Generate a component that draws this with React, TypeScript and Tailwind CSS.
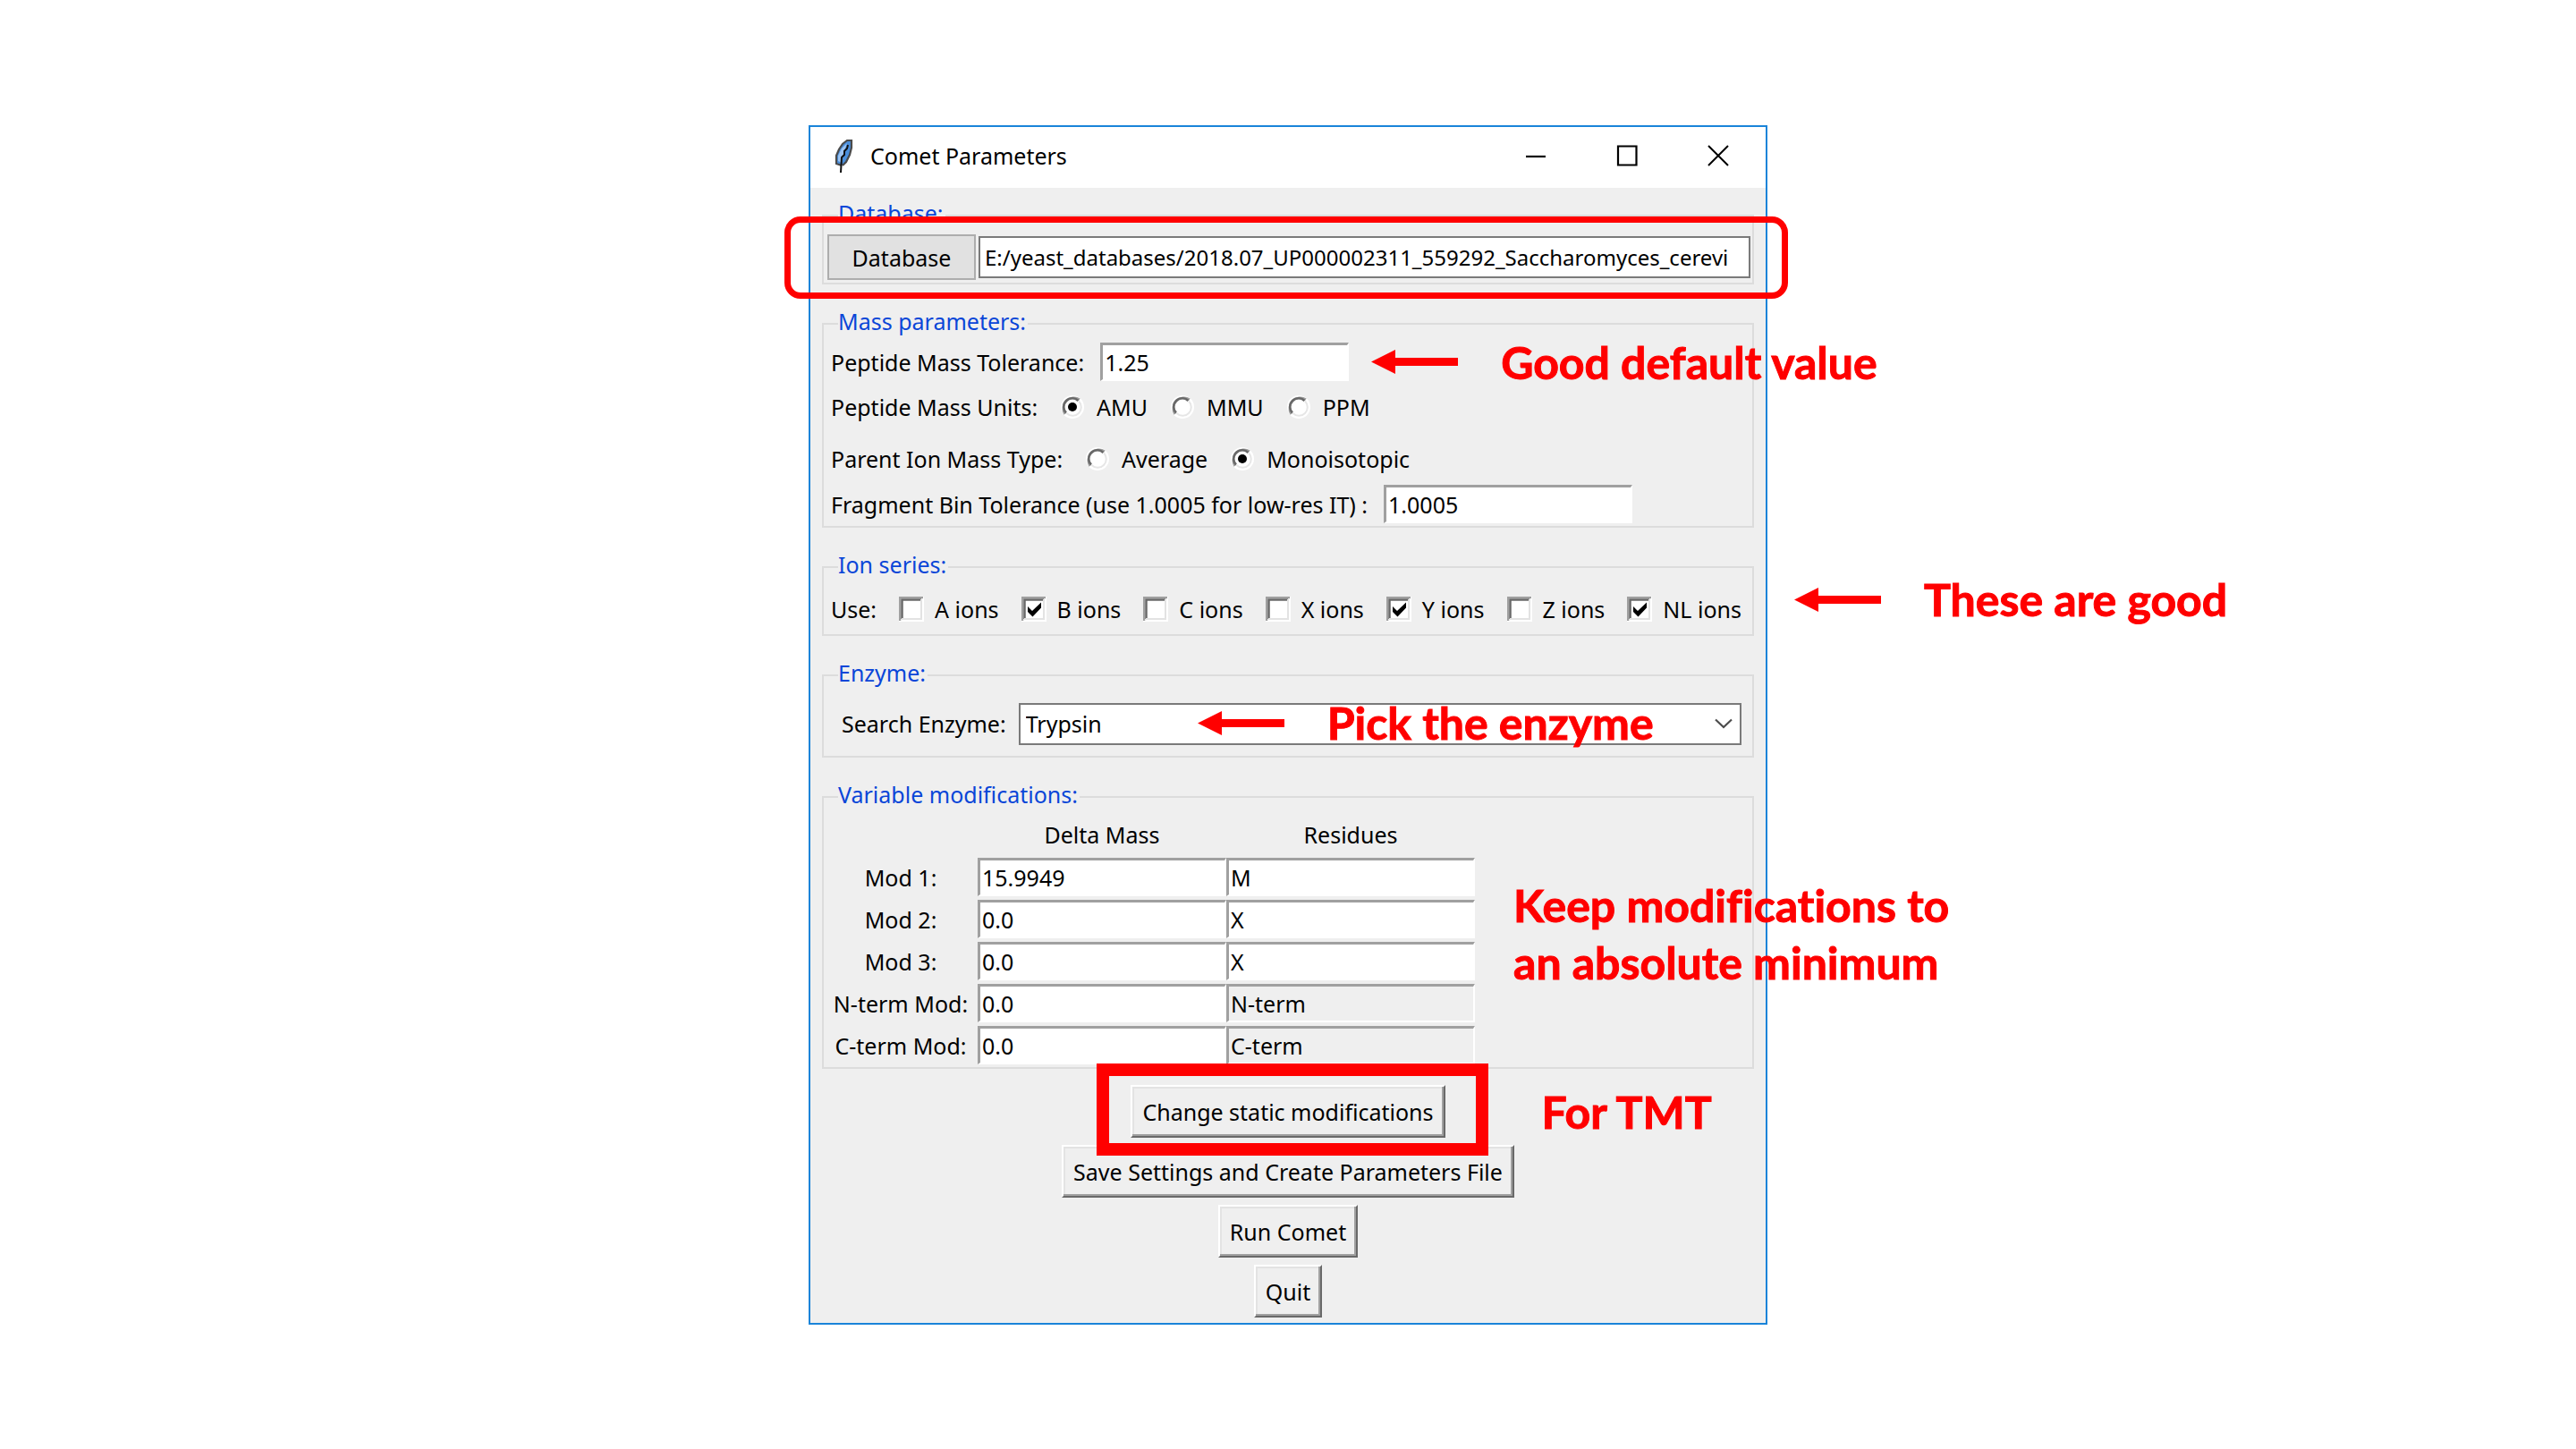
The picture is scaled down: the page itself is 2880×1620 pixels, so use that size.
import type { ReactNode } from "react";

const ions = [
  { name: "A ions", on: false },
  { name: "B ions", on: true },
  { name: "C ions", on: false },
  { name: "X ions", on: false },
  { name: "Y ions", on: true },
  { name: "Z ions", on: false },
  { name: "NL ions", on: true },
];

const mods = [
  { name: "Mod 1:", mass: "15.9949", residue: "M", fixed: false },
  { name: "Mod 2:", mass: "0.0", residue: "X", fixed: false },
  { name: "Mod 3:", mass: "0.0", residue: "X", fixed: false },
  { name: "N-term Mod:", mass: "0.0", residue: "N-term", fixed: true },
  { name: "C-term Mod:", mass: "0.0", residue: "C-term", fixed: true },
];

const sunken =
  "block h-[43px] w-[278px] border-t-[3px] border-l-[3px] border-r-2 border-b-2 border-t-[#a0a0a0] border-l-[#a0a0a0] border-r-white border-b-white pl-0.5 outline-none";

function Feather() {
  return (
    <svg className="h-[38px] w-[24px]" viewBox="0 0 24 38" aria-hidden="true">
      <path d="M9 30 L3 28 L3 19 L6 12 L10 6 L15 2 L20 2 L20 10 L18 18 L14 26 Z" fill="#4a8edb" />
      <path d="M9 27 L5 25 L5 19 L9 11 L15 5 L12 14 Z" fill="#9cc4f2" />
      <path d="M9 30 L3 28 L3 19 L6 12 L10 6 L15 2 L20 2 L20 10 L18 18 L14 26 L10 30" fill="none" stroke="#4b4b4b" strokeWidth="2.2" />
      <path d="M16 7 L15 11 L12 14 L12 18 L9 21 L8 38" fill="none" stroke="#101010" strokeWidth="2" />
    </svg>
  );
}

function Arrow() {
  return (
    <svg className="h-[27px] w-[97px] shrink-0" viewBox="0 0 97 27" fill="#ff0000" aria-hidden="true">
      <path d="M0 13.5 L27 0 V9 H97 V18 H27 V27 Z" />
    </svg>
  );
}

function Note({ className, children }: { className: string; children: ReactNode }) {
  return (
    <div
      className={
        "pointer-events-none absolute z-10 flex items-center gap-12 whitespace-nowrap font-['Lato',sans-serif] text-[50px] leading-[64px] font-bold text-[#ff0000] [-webkit-text-stroke:1px_#ff0000] [font-variant-ligatures:none] " +
        className
      }
    >
      {children}
    </div>
  );
}

function Group({ title, className, children }: { title: string; className: string; children: ReactNode }) {
  return (
    <fieldset className={"min-w-0 border-2 border-[#dcdcdc] py-[3px] " + className}>
      <legend className="pb-1.5 leading-[30px] text-[#0a46d8]">
        <span className="pr-0.5">{title}</span>
      </legend>
      {children}
    </fieldset>
  );
}

function Radio({ name, label, on }: { name: string; label: string; on?: boolean }) {
  return (
    <label className="flex items-center gap-3.5">
      <span className="grid size-[26px]">
        <input type="radio" name={name} defaultChecked={on} className="peer col-start-1 row-start-1 size-[26px] appearance-none rounded-full bg-white" />
        <svg className="pointer-events-none col-start-1 row-start-1 size-[26px]" viewBox="0 0 26 26" fill="none" aria-hidden="true">
          <path d="M4.5 21 A12 12 0 0 1 21 4.5" stroke="#a0a0a0" strokeWidth="2.5" />
          <path d="M6 19.5 A9.5 9.5 0 0 1 19.5 6" stroke="#696969" strokeWidth="2.5" />
          <path d="M20 6.5 A9.5 9.5 0 0 1 6.5 20" stroke="#e6e6e6" strokeWidth="2" />
        </svg>
        <span className="pointer-events-none col-start-1 row-start-1 hidden size-[10px] place-self-center rounded-full bg-black peer-checked:block" />
      </span>
      {label}
    </label>
  );
}

function Check({ label, on }: { label: string; on: boolean }) {
  return (
    <label className="flex items-center gap-3">
      <span className="grid size-[28px]">
        <input type="checkbox" defaultChecked={on} className="peer col-start-1 row-start-1 size-[28px] appearance-none bg-white" />
        <svg className="pointer-events-none col-start-1 row-start-1 size-[28px]" viewBox="0 0 28 28" fill="none" aria-hidden="true">
          <path d="M1 27 V1 H27" stroke="#a0a0a0" strokeWidth="2.5" />
          <path d="M3.5 25 V3.5 H25" stroke="#696969" strokeWidth="2.5" />
          <path d="M3 25 H25 V3" stroke="#e3e3e3" strokeWidth="2" />
        </svg>
        <svg className="pointer-events-none col-start-1 row-start-1 hidden size-[28px] peer-checked:block" viewBox="0 0 28 28" aria-hidden="true">
          <path d="M7 11 L12 16 L22 6.5 V12.5 L12.5 22.5 L7 17 Z" fill="#000" />
        </svg>
      </span>
      {label}
    </label>
  );
}

function PushButton({ children }: { children: ReactNode }) {
  return (
    <button
      type="button"
      className="h-[59px] border-2 border-t-white border-r-[#696969] border-b-[#696969] border-l-white bg-[#efefef] px-[11px] shadow-[inset_-2px_-2px_0_#a0a0a0,inset_2px_2px_0_#e3e3e3]"
    >
      {children}
    </button>
  );
}

export default function App() {
  return (
    <main className="flex min-h-screen items-start justify-center bg-white pt-[140px] font-['Noto_Sans','Open_Sans',sans-serif] text-[25px] leading-[34px] text-black">
      <section className="w-full max-w-[1072px] border-2 border-[#1a84d9] bg-[#efefef]">
        <header className="flex h-[68px] items-center bg-white pr-0.5 pb-1 pl-[26px]">
          <Feather />
          <h1 className="flex-1 pl-[17px]">Comet Parameters</h1>
          <button type="button" aria-label="Minimize" className="grid h-16 w-[102px] place-items-center">
            <svg className="size-6" viewBox="0 0 24 24" stroke="#000" strokeWidth="2.2" fill="none"><path d="M1 13 H23" /></svg>
          </button>
          <button type="button" aria-label="Maximize" className="grid h-16 w-[102px] place-items-center">
            <svg className="size-6" viewBox="0 0 24 24" stroke="#000" strokeWidth="2.2" fill="none"><path d="M2 1.5 H22.5 V22.5 H2 Z" /></svg>
          </button>
          <button type="button" aria-label="Close" className="grid h-16 w-[102px] place-items-center">
            <svg className="size-6" viewBox="0 0 24 24" stroke="#000" strokeWidth="2" fill="none"><path d="M1 1 L23 23 M23 1 L1 23" /></svg>
          </button>
        </header>

        <form className="flex flex-col gap-[26px] px-[13px] pt-[13px] pb-1.5" onSubmit={(e) => e.preventDefault()}>
          <Group title="Database:" className="pr-0.5 pl-1 [&>legend]:ml-3">
            <div className="relative flex items-center gap-[3px]">
              <button type="button" className="h-[51px] w-[166px] border-2 border-[#adadad] bg-[#e1e1e1]">Database</button>
              <input
                aria-label="Database file"
                defaultValue="E:/yeast_databases/2018.07_UP000002311_559292_Saccharomyces_cerevi"
                className="h-[47px] min-w-0 flex-1 border-2 border-[#7a7a7a] bg-white pl-[5px] text-[24px] outline-none"
              />
              <div className="pointer-events-none absolute -top-5 -right-[42px] -bottom-[21px] -left-12 z-10 rounded-[18px] border-[7px] border-[#ff0000]" />
            </div>
          </Group>

          <Group title="Mass parameters:" className="px-2 [&>legend]:ml-2">
            <div className="flex items-center gap-[18px]">
              <label htmlFor="pmt">Peptide Mass Tolerance:</label>
              <div className="relative">
                <input id="pmt" defaultValue="1.25" className={sunken + " bg-white"} />
                <Note className="top-1/2 left-full ml-[25px] -translate-y-1/2">
                  <Arrow />
                  <span>Good default value</span>
                </Note>
              </div>
            </div>
            <div className="flex h-[58px] items-center gap-[26px]" role="radiogroup" aria-label="Peptide Mass Units">
              <span>Peptide Mass Units:</span>
              <Radio name="units" label="AMU" on />
              <Radio name="units" label="MMU" />
              <Radio name="units" label="PPM" />
            </div>
            <div className="flex h-[58px] items-center gap-[26px]" role="radiogroup" aria-label="Parent Ion Mass Type">
              <span>Parent Ion Mass Type:</span>
              <Radio name="masstype" label="Average" />
              <Radio name="masstype" label="Monoisotopic" on />
            </div>
            <div className="flex items-center gap-[18px]">
              <label htmlFor="fbt">Fragment Bin Tolerance (use 1.0005 for low-res IT) :</label>
              <input id="fbt" defaultValue="1.0005" className={sunken + " bg-white"} />
            </div>
          </Group>

          <Group title="Ion series:" className="pr-3 pl-2 [&>legend]:ml-2">
            <div className="relative flex h-[51px] items-center justify-between">
              <span>Use:</span>
              {ions.map((ion) => (
                <Check key={ion.name} label={ion.name} on={ion.on} />
              ))}
              <Note className="bottom-1 left-full ml-[59px]">
                <Arrow />
                <span>These are good</span>
              </Note>
            </div>
          </Group>

          <Group title="Enzyme:" className="pr-3 pl-2 [&>legend]:ml-2">
            <div className="flex h-[66px] items-center gap-3.5 pl-3">
              <label htmlFor="enzyme">Search Enzyme:</label>
              <div className="relative flex-1">
                <select id="enzyme" className="block h-[47px] w-full appearance-none border-2 border-[#7a7a7a] bg-white pl-1.5 outline-none">
                  <option>Trypsin</option>
                </select>
                <svg className="pointer-events-none absolute top-1/2 right-2.5 h-3 w-5 -translate-y-1/2" viewBox="0 0 20 12" fill="none" stroke="#4c4c4c" strokeWidth="2.2" aria-hidden="true">
                  <path d="M1 1.5 L10 10 L19 1.5" />
                </svg>
                <Note className="top-1/2 left-[200px] -translate-y-1/2 pb-0.5">
                  <Arrow />
                  <span>Pick the enzyme</span>
                </Note>
              </div>
            </div>
          </Group>

          <Group title="Variable modifications:" className="px-2 [&>legend]:ml-2">
            <div className="relative w-fit">
              <table className="border-collapse">
                <thead>
                  <tr className="h-[47px]">
                    <td />
                    <th scope="col" className="pb-1.5 font-normal">Delta Mass</th>
                    <th scope="col" className="pb-1.5 font-normal">Residues</th>
                  </tr>
                </thead>
                <tbody>
                  {mods.map((m, i) => (
                    <tr key={m.name}>
                      <th scope="row" className={"w-[164px] pr-2 font-normal whitespace-nowrap " + (i < 4 ? "pb-1" : "")}>{m.name}</th>
                      <td className={i < 4 ? "pb-1" : ""}>
                        <input aria-label={m.name + " delta mass"} defaultValue={m.mass} className={sunken + " bg-white"} />
                      </td>
                      <td className={i < 4 ? "pb-1" : ""}>
                        <input aria-label={m.name + " residues"} defaultValue={m.residue} readOnly={m.fixed} className={sunken + (m.fixed ? " bg-[#efefef]" : " bg-white")} />
                      </td>
                    </tr>
                  ))}
                </tbody>
              </table>
              <Note className="top-[68px] left-full ml-[43px]">
                <p>
                  Keep modifications to
                  <br />
                  an absolute minimum
                </p>
              </Note>
            </div>
          </Group>

          <div className="-mt-2 flex flex-col items-center gap-2">
            <div className="relative">
              <PushButton>Change static modifications</PushButton>
              <div className="pointer-events-none absolute -top-6 -right-[48px] -bottom-5 -left-[38px] z-10 border-[14px] border-[#ff0000]" />
              <Note className="top-1/2 left-full ml-[108px] -translate-y-1/2">
                <span>For TMT</span>
              </Note>
            </div>
            <PushButton>Save Settings and Create Parameters File</PushButton>
            <PushButton>Run Comet</PushButton>
            <PushButton>Quit</PushButton>
          </div>
        </form>
      </section>
    </main>
  );
}
